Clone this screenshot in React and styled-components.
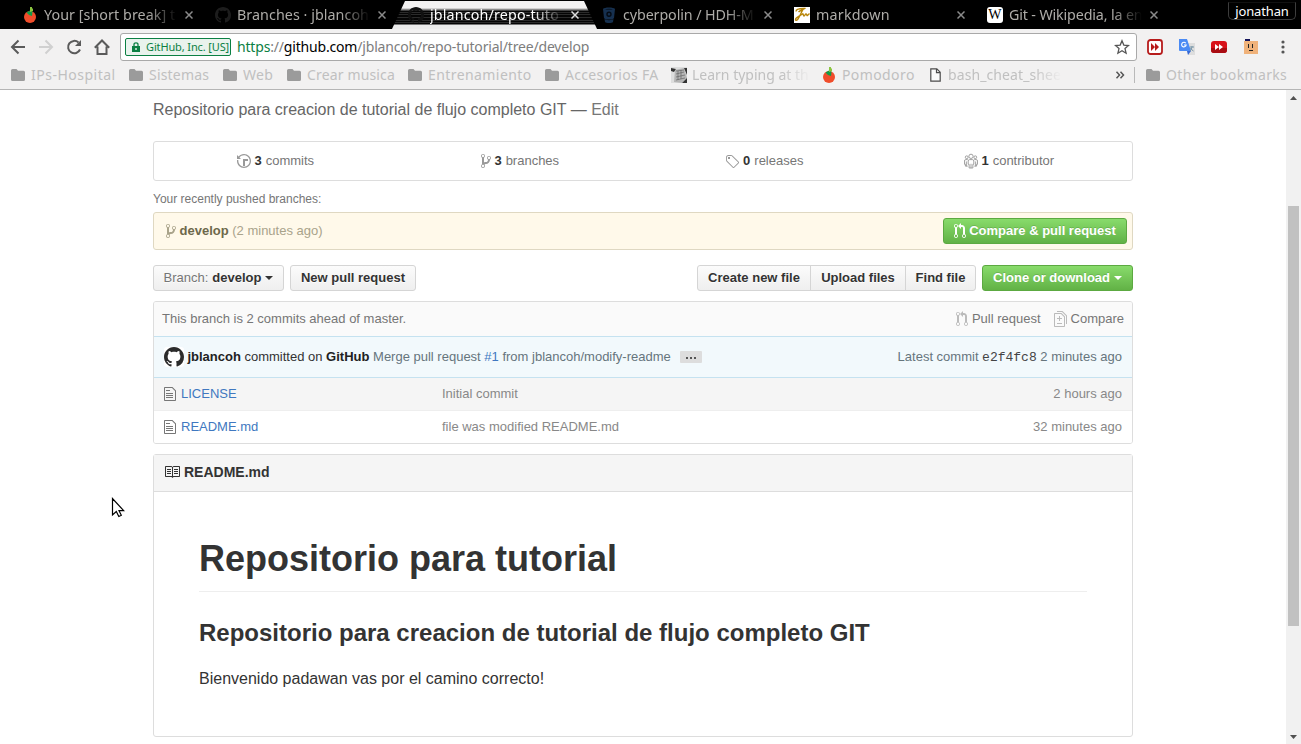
import React from "react";
import styled, { createGlobalStyle, css } from "styled-components";

const Global = createGlobalStyle`
  * { box-sizing: border-box; }
  html, body { margin: 0; height: 100%; overflow: hidden; }
  body { background: #fff; font-family: "Liberation Sans", Arial, sans-serif; font-size: 13px; color: #333; }
  #root { height: 100%; }
`;

const uiFont = css`font-family: "Noto Sans", "Open Sans", sans-serif;`;

const Window = styled.div`
  width: 1301px; height: 744px; display: flex; flex-direction: column; overflow: hidden; position: relative;
`;
const TabStrip = styled.div`
  ${uiFont} height: 29px; flex: none; background: #000; display: flex; padding-left: 3px; position: relative; overflow: hidden;
`;
const TabItem = styled.div`
  position: relative; width: 193px; height: 29px; flex: none; display: flex; align-items: center; padding: 1px 0 0 19px;
  color: ${(p) => (p.$active ? "#fff" : "#aeaca8")};
`;
const TabShape = styled.svg`position: absolute; left: 0; top: 0; overflow: visible;`;
const TabIcon = styled.span`width: 16px; height: 16px; display: flex; flex: none; position: relative;`;
const TabTitle = styled.span`
  margin-left: 6px; width: 133px; font-size: 14.3px; letter-spacing: ${(p) => p.$ls || 0}px; white-space: pre; overflow: hidden; position: relative;
  line-height: 22px;
  -webkit-mask-image: linear-gradient(90deg, #000 78%, transparent 100%);
`;
const CloseIcon = styled.svg`margin-left: 8px; position: relative; flex: none;`;
const UserBadge = styled.div`
  position: absolute; left: 1228px; top: 2px; width: 68px; height: 18px; border: 1px solid #3d3d3d; border-top-color: #111; border-radius: 0 0 5px 5px;
  color: #fff; font-size: 13px; line-height: 17px; text-align: center; letter-spacing: -0.15px; background: #000;
`;

const Toolbar = styled.div`
  ${uiFont} height: 32px; flex: none; background: #f2f1f1; display: flex; align-items: center; padding: 4px 0 0 10px;
`;
const NavIcon = styled.svg`flex: none; margin-right: 12px;`;
const AddressBar = styled.div`
  height: 28px; width: 1017px; margin-left: -2px; background: #fff; border: 1px solid #a9a9a9; border-radius: 3px; display: flex; align-items: center; padding: 0 6px 0 4px;
`;
const Identity = styled.div`
  height: 18px; width: 106px; border: 1px solid #0b8043; border-radius: 2px; background: #e9f3ed; color: #0b8043; display: flex; align-items: center;
  padding-left: 6px; font-size: 11px; white-space: nowrap; letter-spacing: -0.13px; flex: none;
`;
const IdentityText = styled.span`margin-left: 6px; padding-bottom: 1px;`;
const Url = styled.div`margin-left: 6px; flex: 1; padding-bottom: 2px; font-size: 14px; letter-spacing: -0.18px; color: #7d7d7d; white-space: nowrap;`;
const Secure = styled.span`color: #0b8043;`;
const Host = styled.span`color: #000;`;
const Extensions = styled.div`display: flex; align-items: center; margin-left: 10px; gap: 16px;`;

const Bookmarks = styled.div`
  ${uiFont} height: 29px; flex: none; background: #f2f1f1; border-bottom: 1px solid #b5b5b5; display: flex; align-items: center; padding: 0 0 1px 11px;
  font-size: 14px; color: #c0c0c0; white-space: nowrap;
`;
const Bookmark = styled.div`display: flex; align-items: center; flex: none; width: ${(p) => p.$w}px;`;
const BookmarkText = styled.span`
  margin-left: ${(p) => p.$gap || 6}px; letter-spacing: ${(p) => p.$ls || 0}px; flex: 1; overflow: hidden;
  ${(p) => p.$fade && "margin-right: 10px; -webkit-mask-image: linear-gradient(90deg, #000 75%, transparent 100%);"}
`;
const Divider = styled.div`width: 1px; height: 16px; background: #b9b9b9; margin: 0 11px 0 9px;`;

const Viewport = styled.div`flex: 1; display: flex; min-height: 0;`;
const Page = styled.main`flex: 1; display: flex; flex-direction: column; align-items: center; padding-top: 8px; overflow: hidden;`;
const Container = styled.div`width: 980px; flex: none;`;
const ScrollTrack = styled.div`
  width: 15px; background: #f1f1f1; display: flex; flex-direction: column; align-items: center; padding: 6px 0 5px;
`;
const ScrollThumb = styled.div`width: 11px; height: 420px; background: #c1c1c1; margin-top: 106px; margin-bottom: auto;`;

const Description = styled.div`font-size: 16px; line-height: 24px; color: #666; margin-bottom: 19px;`;
const EditLink = styled.span`color: #777;`;
const Stats = styled.div`height: 40px; border: 1px solid #ddd; border-radius: 3px; display: flex;`;
const Stat = styled.div`flex: 1; display: flex; align-items: center; justify-content: center; color: #767676; padding: 0 1px 1px 0;`;
const Strong = styled.b`color: #333; margin: 0 4px 0 3px;`;
const PushedLabel = styled.div`font-size: 12px; line-height: 18px; color: #767676; margin: 9px 0 4px;`;
const PushedBranch = styled.div`
  height: 38px; border: 1px solid #dfd8c2; border-radius: 3px; background: #fff9ea; display: flex; align-items: center; padding: 0 5px 0 12px; color: #a9a38a;
`;
const PushedText = styled.span`margin-left: 3.5px; padding-bottom: 2px;`;
const BranchName = styled.b`color: #6d684b;`;
const Spacer = styled.div`flex: 1;`;
const Button = styled.button`
  height: 26px; width: ${(p) => p.$w}px; padding: 0 0 2px; font: bold 13px "Liberation Sans", Arial, sans-serif; display: inline-flex; align-items: center; justify-content: center;
  border: 1px solid ${(p) => (p.$green ? "#5ca941" : "#d5d5d5")}; border-radius: 3px; color: ${(p) => (p.$green ? "#fff" : "#333")};
  background: ${(p) => (p.$green ? "linear-gradient(#8add6d, #60b044)" : "linear-gradient(#fcfcfc, #eee)")};
  background-origin: border-box;
  text-shadow: ${(p) => (p.$green ? "0 -1px 0 rgba(0,0,0,.15)" : "0 1px 0 rgba(255,255,255,.9)")}; white-space: pre;
  svg { margin-top: 2px; }
`;
const ButtonLabel = styled.span`margin-left: 3px;`;
const Muted = styled.span`font-weight: normal; color: #767676; margin-right: 4px;`;
const Caret = styled.span`border: 4px solid transparent; border-top-color: currentColor; border-bottom: 0; margin: 1px 0 0 4px;`;
const Actions = styled.div`display: flex; gap: 6px; margin: 15px 0 10px;`;
const ButtonGroup = styled.div`
  display: flex;
  button { border-radius: 0; margin-left: -1px; }
  button:first-child { border-radius: 3px 0 0 3px; margin-left: 0; }
  button:last-child { border-radius: 0 3px 3px 0; }
`;
const FilesBox = styled.div`border: 1px solid #ddd; border-radius: 3px; overflow: hidden;`;
const Tease = styled.div`
  height: 34px; background: #fafafa; color: #767676; display: flex; align-items: center; padding: 0 8px 2px;
`;
const TeaseLink = styled.span`
  display: inline-flex; align-items: center; gap: ${(p) => p.$gap}px; margin-left: ${(p) => p.$ml || 0}px;
  svg { color: #bbb; margin-top: 2px; }
`;
const CommitRow = styled.div`
  height: 42px; border: 1px solid #c5e2f0; border-width: 1px 0; background: #f2f9fc; color: #66757c; display: flex; align-items: center; padding: 0 10px; white-space: pre;
`;
const Avatar = styled.span`width: 20px; height: 20px; background: #fff; border-radius: 3px; display: flex; margin-right: 3.4px; color: #2b2b2b;`;
const CommitText = styled.span`padding-bottom: 2px;`;
const Dark = styled.span`color: #333;`;
const Author = styled.b`color: #222;`;
const Issue = styled.span`color: #4078c0;`;
const Ellipsis = styled.span`
  width: 22px; height: 12px; margin-left: 9px; background: #ddd; border-radius: 1px; display: flex; align-items: center; justify-content: center; gap: 2px;
`;
const Dot = styled.i`width: 2px; height: 2px; background: #555; margin-top: 1px;`;
const Sha = styled.span`font: 13px "Liberation Mono", monospace; color: #444;`;
const FileRow = styled.div`
  height: ${(p) => (p.$first ? 33 : 32)}px; display: grid; grid-template-columns: 17px 261px 1fr auto; align-items: center; padding: 0 10px; color: #888;
  background: ${(p) => (p.$first ? "#f5f5f5" : "#fff")}; ${(p) => p.$first && "border-bottom: 1px solid #eee;"}
  svg { color: #777; }
  span { padding-bottom: 2px; }
`;
const FileLink = styled.span`color: #4078c0;`;
const Readme = styled.section`height: 283px; margin-top: 10px; border: 1px solid #ddd; border-radius: 3px;`;
const ReadmeHead = styled.div`
  height: 37px; background: #f5f5f5; border-bottom: 1px solid #ddd; display: flex; align-items: center; padding: 0 10px 2px; font-size: 14px; font-weight: bold; gap: 4px;
`;
const ReadmeBody = styled.div`padding: 45px 45px 0; font-size: 16px;`;
const H1 = styled.h1`margin: 0 0 26px; font-size: 36px; line-height: 43px; padding-bottom: 11px; border-bottom: 1px solid #eee;`;
const H2 = styled.h2`margin: 0 0 19px; font-size: 24px; line-height: 30px;`;
const Paragraph = styled.p`margin: 0; line-height: 24px;`;
const Cursor = styled.svg`position: absolute; left: 111px; top: 497px;`;

const paths = {
  history: [14, "M8 13H6V6h5v2H8v5zM7 1C4.81 1 2.87 2.02 1.59 3.59L0 2v4h4L2.5 4.5C3.55 3.17 5.17 2.3 7 2.3c3.14 0 5.7 2.56 5.7 5.7s-2.56 5.7-5.7 5.7A5.71 5.71 0 0 1 1.3 8c0-.34.03-.67.09-1H.08C.03 7.33 0 7.66 0 8c0 3.86 3.14 7 7 7s7-3.14 7-7-3.14-7-7-7z"],
  branch: [10, "M10 5c0-1.11-.89-2-2-2a1.993 1.993 0 0 0-1 3.72v.3c-.02.52-.23.98-.63 1.38-.4.4-.86.61-1.38.63-.83.02-1.48.16-2 .45V4.72a1.993 1.993 0 0 0-1-3.72C.88 1 0 1.89 0 3a2 2 0 0 0 1 1.72v6.56c-.59.35-1 .99-1 1.72 0 1.11.89 2 2 2 1.11 0 2-.89 2-2 0-.53-.2-1-.53-1.36.09-.06.48-.41.59-.47.25-.11.56-.17.94-.17 1.05-.05 1.95-.45 2.75-1.25S8.95 7.77 9 6.73h-.02C9.59 6.37 10 5.73 10 5zM2 1.8c.66 0 1.2.55 1.2 1.2 0 .65-.55 1.2-1.2 1.2C1.35 4.2.8 3.65.8 3c0-.65.55-1.2 1.2-1.2zm0 12.41c-.66 0-1.2-.55-1.2-1.2 0-.65.55-1.2 1.2-1.2.65 0 1.2.55 1.2 1.2 0 .65-.55 1.2-1.2 1.2zm6-8c-.66 0-1.2-.55-1.2-1.2 0-.65.55-1.2 1.2-1.2.65 0 1.2.55 1.2 1.2 0 .65-.55 1.2-1.2 1.2z"],
  tag: [14, "M6.73 2.73c-.47-.47-1.11-.73-1.77-.73H2.5A2.5 2.5 0 0 0 0 4.5v2.47c0 .66.27 1.3.73 1.77l6.06 6.06c.39.39 1.02.39 1.41 0l4.59-4.59a.996.996 0 0 0 0-1.41L6.73 2.73zM1.38 8.09c-.31-.3-.47-.7-.47-1.13V4.5c0-.88.72-1.59 1.59-1.59h2.47c.42 0 .83.16 1.13.47l6.14 6.13-4.73 4.73-6.13-6.15zM2 4h2v2H2V4z"],
  pull: [12, "M11 11.28V5c-.03-.78-.34-1.47-.94-2.06C9.46 2.35 8.78 2.03 8 2H7V0L4 3l3 3V4h1c.27.02.48.11.69.31.21.2.3.42.31.69v6.28A1.993 1.993 0 0 0 10 15a1.993 1.993 0 0 0 1-3.72zm-1 2.92c-.66 0-1.2-.55-1.2-1.2 0-.65.55-1.2 1.2-1.2.65 0 1.2.55 1.2 1.2 0 .65-.55 1.2-1.2 1.2zM4 3c0-1.11-.89-2-2-2a1.993 1.993 0 0 0-1 3.72v6.56A1.993 1.993 0 0 0 2 15a1.993 1.993 0 0 0 1-3.72V4.72c.59-.34 1-.98 1-1.72zm-.8 10c0 .66-.55 1.2-1.2 1.2-.65 0-1.2-.55-1.2-1.2 0-.65.55-1.2 1.2-1.2.65 0 1.2.55 1.2 1.2zM2 4.2C1.34 4.2.8 3.65.8 3c0-.65.55-1.2 1.2-1.2.65 0 1.2.55 1.2 1.2 0 .65-.55 1.2-1.2 1.2z"],
  file: [12, "M6 5H2V4h4v1zM2 8h7V7H2v1zm0 2h7V9H2v1zm0 2h7v-1H2v1zm10-7.5V14c0 .55-.45 1-1 1H1c-.55 0-1-.45-1-1V2c0-.55.45-1 1-1h7.5L12 4.5zM11 5L8 2H1v12h10V5z"],
  diff: [13, "M6 7h2v1H6v2H5V8H3V7h2V5h1v2zm-3 6h5v-1H3v1zM7.5 2L11 5.5V15c0 .55-.45 1-1 1H1c-.55 0-1-.45-1-1V3c0-.55.45-1 1-1h6.5zM10 6L7 3H1v12h9V6zM8.5 0H3v1h5l4 4v8h1V4.5L8.5 0z"],
  book: [16, "M3 5h4v1H3V5zm0 3h4V7H3v1zm0 2h4V9H3v1zm11-5h-4v1h4V5zm0 2h-4v1h4V7zm0 2h-4v1h4V9zm2-6v9c0 .55-.45 1-1 1H9.5l-1 1-1-1H2c-.55 0-1-.45-1-1V3c0-.55.45-1 1-1h5.5l1 1 1-1H15c.55 0 1 .45 1 1zm-8 .5L7.5 3H2v9h6V3.5zm7-.5H9.5l-.5.5V12h6V3z"],
  github: [16, "M8 0C3.58 0 0 3.58 0 8c0 3.54 2.29 6.53 5.47 7.59.4.07.55-.17.55-.38 0-.19-.01-.82-.01-1.49-2.01.37-2.53-.49-2.69-.94-.09-.23-.48-.94-.82-1.13-.28-.15-.68-.52-.01-.53.63-.01 1.08.58 1.23.82.72 1.21 1.87.87 2.33.66.07-.52.28-.87.51-1.07-1.78-.2-3.64-.89-3.64-3.95 0-.87.31-1.59.82-2.15-.08-.2-.36-1.02.08-2.12 0 0 .67-.21 2.2.82.64-.18 1.32-.27 2-.27.68 0 1.36.09 2 .27 1.53-1.04 2.2-.82 2.2-.82.44 1.1.16 1.92.08 2.12.51.56.82 1.27.82 2.15 0 3.07-1.87 3.75-3.65 3.95.29.25.54.73.54 1.48 0 1.07-.01 1.93-.01 2.2 0 .21.15.46.55.38A8.013 8.013 0 0 0 16 8c0-4.42-3.58-8-8-8z"],
};
const Oct = ({ name, size = 16, color = "currentColor" }) => {
  const [w, d] = paths[name];
  return <svg width={(w * size) / 16} height={size} viewBox={`0 0 ${w} 16`}><path fill={color} fillRule="evenodd" d={d} /></svg>;
};
const People = () => (
  <svg width="14" height="16" viewBox="0 0 15 16" fill="none" stroke="#999">
    <circle cx="7.5" cy="3" r="2.3" /><circle cx="2.9" cy="4" r="1.5" /><circle cx="12.1" cy="4" r="1.5" />
    <path d="M5.5 15.5v-4h-1V8c0-1 .7-1.5 1.5-1.5h3c.8 0 1.5.5 1.5 1.5v3.5h-1v4zM7.5 11v4.5M4 6.5H2C1 6.5.5 7 .5 8v3.5h1v2H4M11 6.5h2c1 0 1.5.5 1.5 1.5v3.5h-1v2H11M2.5 8.5v5M12.5 8.5v5" />
  </svg>
);
const Tomato = () => (
  <svg width="16" height="16" viewBox="0 0 16 16">
    <circle cx="8" cy="10" r="6" fill="#f04d2b" /><path d="M4.500 5.500L8 3.500l2.500 1-.5 4.500-3-1z" fill="#119c48" /><path d="M8 0h2v1.500h1V4L8 5z" fill="#8bc53f" />
  </svg>
);
const Bitbucket = () => (
  <svg width="16" height="16" viewBox="0 0 16 16"><path d="M2 2c1-2 11-2 12 0l-1 9c-1 2-9 2-10 0zM3.5 12c2 1.5 7 1.5 9 0l-.5 3c-1 1.3-7 1.3-8 0z" fill="#16304f" /><path d="M4 2.3c2-.8 6-.8 8 0-2 .7-6 .7-8 0" fill="#0a1626" /><circle cx="8" cy="7.2" r="2" fill="none" stroke="#050b14" strokeWidth="1.4" /></svg>
);
const Markdown = () => (
  <svg width="16" height="16" viewBox="0 0 16 16"><path fill="#fff" d="M0 0h16v16H0z" /><path d="M2 4.500c0-2 4-3 7.500-3-2 3-3 7-5.500 10.500-1 1.500-2.500 2-2.500.5C1.500 10.500 6 9 8.500 7c1-1 .5 2 1.500 2s1-2 2-2 .5 2 1.500 1.500L15.500 6.500M4.500 5c2-2 5-2.500 7-4" stroke="#b8860b" strokeWidth="1.400" fill="none" /></svg>
);
const WikiBox = styled.span`
  width: 16px; height: 16px; background: #fff; border-radius: 3px; color: #000; font: 14px/16px "Liberation Serif", serif; text-align: center; text-indent: -0.5px; overflow: hidden;
`;
const Folder = () => <svg width="14" height="12" viewBox="0 0 14 12"><path d="M1.5 0H5.5l1.5 1.8h5.5Q14 1.8 14 3.3v7.2Q14 12 12.5 12h-11Q0 12 0 10.5v-9Q0 0 1.5 0z" fill="#9b9b9b" /></svg>;
const Doc = () => <svg width="11" height="14" viewBox="0 0 11 14"><path d="M.8.8h6l3.4 3.4v9H.8zM6.5.8v3.8h3.7" fill="#fafafa" stroke="#4b4b4b" strokeWidth="1.2" /></svg>;
const Typing = () => (
  <svg width="16" height="16" viewBox="0 0 16 16"><path fill="#ddd" d="M0 0h16v16H0z" /><path d="M0 1l5 1-2 3-3-1z" fill="#333" /><path d="M4 3l9-2 3 10-5 5-8-1z" fill="#b5b5b5" /><path d="M5 4l8-1M5 7l8-2M5 10l9-2M5 13l9-2M7 4v9M10 3v9" stroke="#666" strokeWidth=".7" /><path d="M13 1h3v7zM11 16l5-5v5z" fill="#333" /></svg>
);

const tabs = [
  { title: "Your [short break] t", icon: <Tomato />, ls: 0.06 },
  { title: "Branches · jblancoh", icon: <Oct name="github" color="#1d1d1d" />, ls: 0.05 },
  { title: "jblancoh/repo-tuto", icon: <Oct name="github" color="#111" />, ls: 0.15, active: true },
  { title: "cyberpolin / HDH-M", icon: <Bitbucket />, ls: -0.1 },
  { title: "markdown", icon: <Markdown />, ls: 0.2 },
  { title: "Git - Wikipedia, la en", icon: <WikiBox>W</WikiBox>, ls: -0.15 },
];
const folders = [["IPs-Hospital", 118, 0.5], ["Sistemas", 94, 0.2], ["Web", 64, 0.3], ["Crear musica", 121, 0.15], ["Entrenamiento", 137, 0.42], ["Accesorios FA", 126, 0.3]];

const ActiveShape = () => (
  <TabShape width="208" height="29">
    <defs>
      <clipPath id="trap"><path d="M16 1H195L208 29H3z" /></clipPath>
      <linearGradient id="edge" x2="0" y2="1"><stop stopColor="#f2f1f1" /><stop offset="1" stopColor="#222" /></linearGradient>
    </defs>
    <g clipPath="url(#trap)">
      <path fill="#050505" d="M0 0h210v29H0z" /><path fill="#f2f1f1" d="M0 1h210v7H0z" />
      <path fill="url(#edge)" d="M0 8h210v3H0z" /><path fill="#2b2b2b" d="M0 12h210v1H0zM0 14h210v1H0zM0 17h210v1H0zM0 20h210v1H0zM0 22h210v1H0z" />
      <path fill="#777" d="M0 24h210v1H0z" /><path fill="#ececec" d="M0 25h210v4H0z" />
    </g>
  </TabShape>
);

export default function App() {
  return (
    <Window>
      <Global />
      <TabStrip>
        {tabs.map(({ title, icon, ls, active }) => (
          <TabItem key={title} $active={active}>
            {active && <ActiveShape />}
            <TabIcon>{icon}</TabIcon>
            <TabTitle $ls={ls}>{title}</TabTitle>
            <CloseIcon width="8" height="8" viewBox="0 0 8 8"><path d="M.5.5l7 7M7.5.5l-7 7" stroke={active ? "#ddd" : "#8a8a8a"} strokeWidth="1.5" /></CloseIcon>
          </TabItem>
        ))}
        <UserBadge>jonathan</UserBadge>
      </TabStrip>
      <Toolbar>
        <NavIcon width="16" height="16" viewBox="0 0 16 16" fill="none" stroke="#5a5a5a" strokeWidth="2"><path d="M15 8H2.5M8.5 1.5L2 8l6.5 6.5" /></NavIcon>
        <NavIcon width="16" height="16" viewBox="0 0 16 16" fill="none" stroke="#d0d0d0" strokeWidth="2"><path d="M1 8h12.5M7.5 1.5L14 8l-6.500 6.500" /></NavIcon>
        <NavIcon width="16" height="16" viewBox="0 0 16 16" fill="none" stroke="#5a5a5a" strokeWidth="2"><path d="M14 10.5A6.2 6.2 0 1 1 12.5 3.5" /><path d="M15 1v6H9z" fill="#5a5a5a" stroke="none" /></NavIcon>
        <NavIcon width="16" height="16" viewBox="0 0 16 16" fill="none" stroke="#5a5a5a" strokeWidth="2"><path d="M.8 8.8L8 1.5l7.2 7.3M3.5 7.5V15h9V7.5" /></NavIcon>
        <AddressBar>
          <Identity>
            <svg width="8" height="10" viewBox="0 0 8 10"><path d="M2 4V2.5q0-1.7 2-1.7t2 1.7V4" fill="none" stroke="#0b8043" strokeWidth="1.3" /><path d="M0 4h8v6H0zM3.3 6v2h1.4V6z" fill="#0b8043" fillRule="evenodd" /></svg>
            <IdentityText>GitHub, Inc. [US]</IdentityText>
          </Identity>
          <Url><Secure>https</Secure>://<Host>github.com</Host>/jblancoh/repo-tutorial/tree/develop</Url>
          <svg width="16" height="16" viewBox="0 0 16 16"><path d="M8 1.8l1.8 4.3 4.7.4L11 9.6l1.1 4.6L8 11.7l-4.1 2.5L5 9.6 1.5 6.5l4.7-.4z" fill="none" stroke="#555" strokeWidth="1.3" /></svg>
        </AddressBar>
        <Extensions>
          <svg width="16" height="16" viewBox="0 0 16 16"><rect x="1" y="1" width="14" height="14" rx="2.500" fill="#fff" stroke="#b71c1c" strokeWidth="1.8" /><path d="M4 4l4 4-4 4zM8 4l4 4-4 4z" fill="#b71c1c" /></svg>
          <svg width="16" height="16" viewBox="0 0 16 16"><path d="M6 4h10v12H9z" fill="#dedede" /><path d="M0 0h8l4 12H1q-1 0-1-1z" fill="#4b8bf4" /><path d="M8 12h4l-3 4z" fill="#3467d6" /><path d="M6.8 4.2A2.3 2.3 0 1 0 7.2 6H5" fill="none" stroke="#fff" strokeWidth="1.1" /><path d="M11 8h4M13 7v1q-1 3-2 4M11.5 9q1 2 3 3" stroke="#7795a8" fill="none" /></svg>
          <svg width="16" height="16" viewBox="0 0 16 16"><rect y="2" width="16" height="12" rx="3" fill="#d8121a" /><path d="M0 9h16v2q0 3-3 3H3q-3 0-3-3z" fill="#a90c12" /><path d="M4 5l4 3-4 3zM8 5l4 3-4 3z" fill="#fff" /></svg>
          <svg width="16" height="16" viewBox="0 0 16 16"><path fill="#f0b27a" d="M1 2h14v13H1z" /><path fill="#14145a" d="M2 0h5v2H2z" /><path d="M5 5h1v4H5zM9 5h1v4H9zM6 11h4v1H6z" fill="#222" /></svg>
          <svg width="16" height="16" viewBox="0 0 16 16" fill="#555"><circle cx="8" cy="3" r="1.6" /><circle cx="8" cy="8" r="1.6" /><circle cx="8" cy="13" r="1.6" /></svg>
        </Extensions>
      </Toolbar>
      <Bookmarks>
        {folders.map(([name, w, ls]) => <Bookmark key={name} $w={w}><Folder /><BookmarkText $ls={ls}>{name}</BookmarkText></Bookmark>)}
        <Bookmark $w={150}><Typing /><BookmarkText $fade $gap={5}>Learn typing at th</BookmarkText></Bookmark>
        <Bookmark $w={109}><Tomato /><BookmarkText $gap={5} $ls={0.4}>Pomodoro</BookmarkText></Bookmark>
        <Bookmark $w={142}><Doc /><BookmarkText $fade $gap={7} $ls={0.1}>bash_cheat_shee</BookmarkText></Bookmark>
        <Spacer />
        <svg width="10" height="8" viewBox="0 0 10 8"><path d="M1.5.8L4.5 4l-3 3.2M5.5.8L8.5 4l-3 3.2" stroke="#555" strokeWidth="1.5" fill="none" /></svg>
        <Divider />
        <Bookmark $w={155}><Folder /><BookmarkText $ls={0.35}>Other bookmarks</BookmarkText></Bookmark>
      </Bookmarks>
      <Viewport>
        <Page>
          <Container>
            <Description>Repositorio para creacion de tutorial de flujo completo GIT — <EditLink>Edit</EditLink></Description>
            <Stats>
              <Stat><Oct name="history" color="#999" /><Strong>3</Strong>commits</Stat>
              <Stat><Oct name="branch" color="#999" /><Strong>3</Strong>branches</Stat>
              <Stat><Oct name="tag" color="#999" /><Strong>0</Strong>releases</Stat>
              <Stat><People /><Strong>1</Strong>contributor</Stat>
            </Stats>
            <PushedLabel>Your recently pushed branches:</PushedLabel>
            <PushedBranch>
              <Oct name="branch" /><PushedText><BranchName>develop</BranchName> (2 minutes ago)</PushedText>
              <Spacer />
              <Button $green $w={184}><Oct name="pull" /><ButtonLabel>Compare &amp; pull request</ButtonLabel></Button>
            </PushedBranch>
            <Actions>
              <Button $w={131}><Muted>Branch:</Muted>develop<Caret /></Button>
              <Button $w={126}>New pull request</Button>
              <Spacer />
              <ButtonGroup>
                <Button $w={114}>Create new file</Button>
                <Button $w={96}>Upload files</Button>
                <Button $w={71}>Find file</Button>
              </ButtonGroup>
              <Button $green $w={151}>Clone or download<Caret /></Button>
            </Actions>
            <FilesBox>
              <Tease>
                This branch is 2 commits ahead of master.
                <Spacer />
                <TeaseLink $gap={4}><Oct name="pull" />Pull request</TeaseLink>
                <TeaseLink $gap={4} $ml={13}><Oct name="diff" />Compare</TeaseLink>
              </Tease>
              <CommitRow>
                <Avatar><Oct name="github" size={20} /></Avatar>
                <CommitText><Dark><Author>jblancoh</Author> committed on <Author>GitHub</Author></Dark> Merge pull request <Issue>#1</Issue> from jblancoh/modify-readme</CommitText>
                <Ellipsis><Dot /><Dot /><Dot /></Ellipsis>
                <Spacer />
                <span>Latest commit <Sha>e2f4fc8</Sha> 2 minutes ago</span>
              </CommitRow>
              <FileRow $first><Oct name="file" /><FileLink>LICENSE</FileLink><span>Initial commit</span><span>2 hours ago</span></FileRow>
              <FileRow><Oct name="file" /><FileLink>README.md</FileLink><span>file was modified README.md</span><span>32 minutes ago</span></FileRow>
            </FilesBox>
            <Readme>
              <ReadmeHead><Oct name="book" />README.md</ReadmeHead>
              <ReadmeBody>
                <H1>Repositorio para tutorial</H1>
                <H2>Repositorio para creacion de tutorial de flujo completo GIT</H2>
                <Paragraph>Bienvenido padawan vas por el camino correcto!</Paragraph>
              </ReadmeBody>
            </Readme>
          </Container>
        </Page>
        <ScrollTrack>
          <svg width="7" height="4"><path d="M0 4L3.5 0 7 4z" fill="#505050" /></svg>
          <ScrollThumb />
          <svg width="7" height="4"><path d="M0 0l3.5 4L7 0z" fill="#505050" /></svg>
        </ScrollTrack>
      </Viewport>
      <Cursor width="14" height="22" viewBox="0 0 14 22"><path d="M1.5 1.5v16.5l3.8-3.5 2.5 5 2.5-1.2-2.3-4.6h4.7z" fill="#fff" stroke="#000" strokeWidth="1.2" /></Cursor>
    </Window>
  );
}
